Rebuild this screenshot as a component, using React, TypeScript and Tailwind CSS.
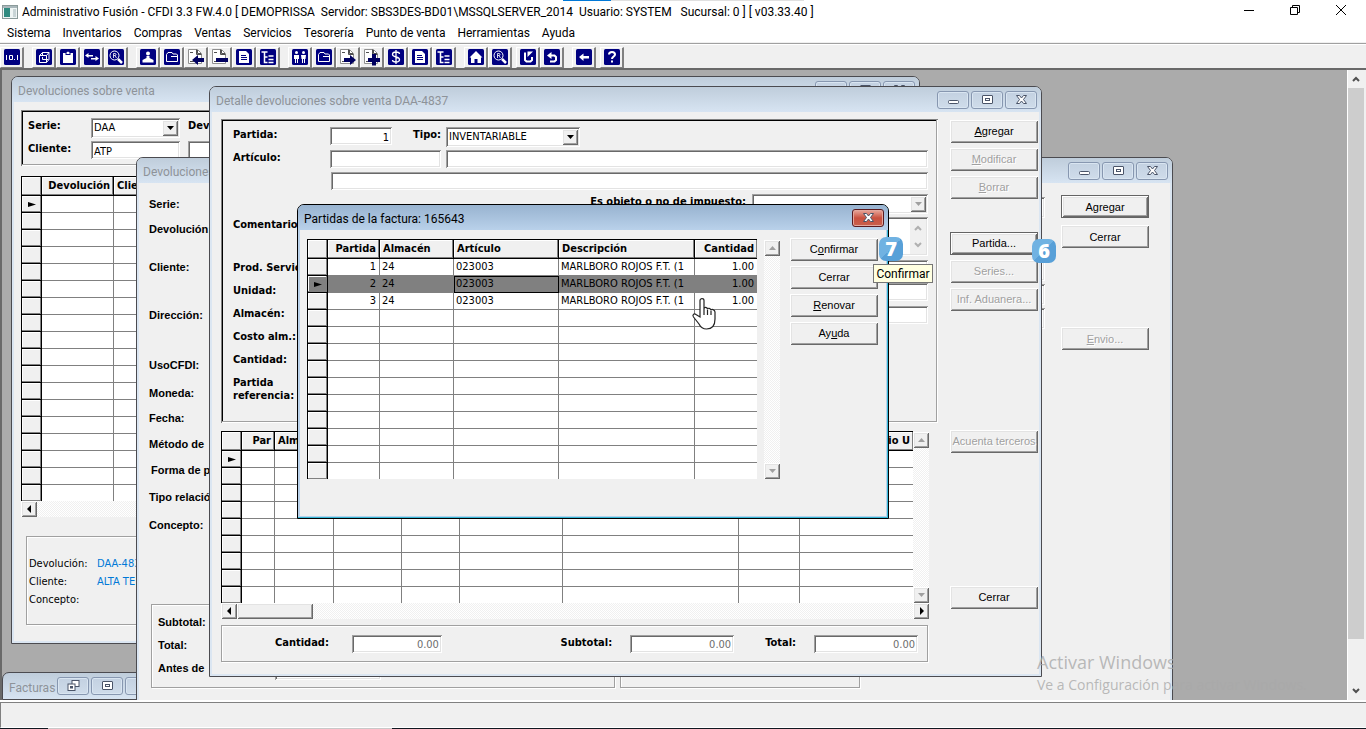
import type { ReactNode } from 'react';

const SUNKEN =
  'bg-white shadow-[inset_1px_1px_0_#a0a0a0,inset_-1px_-1px_0_#ffffff,inset_2px_2px_0_#696969,inset_-2px_-2px_0_#e3e3e3]';
const RAISED =
  'bg-[#f0f0f0] shadow-[inset_1px_1px_0_#ffffff,inset_-1px_-1px_0_#696969,inset_2px_2px_0_#e3e3e3,inset_-2px_-2px_0_#a0a0a0]';
const UI = "font-['Roboto','Open_Sans',sans-serif]";
const OPEN = "font-['Open_Sans','Noto_Sans',sans-serif]";
const TAHOMA = "font-['DejaVu_Sans_Condensed','DejaVu_Sans',sans-serif]";
const ARIAL = "font-['Liberation_Sans',Arial,sans-serif]";
const DITHER = 'bg-[repeating-conic-gradient(#ffffff_0_25%,#f0f0f0_0_50%)] bg-[length:2px_2px]';

const MENUS = ['Sistema', 'Inventarios', 'Compras', 'Ventas', 'Servicios', 'Tesorería', 'Punto de venta', 'Herramientas', 'Ayuda'];

// Iconos de la barra de herramientas
const ICONS: Record<string, ReactNode> = {
  counter: (
    <path d="M2.5 6v5M5.5 6.5h3v4h-3zM10.5 10v1M13.5 6v5" stroke="#fff" fill="none" />
  ),
  cube: (
    <path d="M3.5 6.5h7v7h-7zM3.5 6.5l3-3h6.500v7l-2.500 3M10.500 6.500l2.500-3M6.500 3.500v3M6.500 8v2.500h6" stroke="#fff" fill="none" />
  ),
  clipboard: (
    <>
      <path d="M3 4h2.500v2h5V4H13v10H3z" fill="#fff" />
      <path d="M6.500 5V3.500L8 2.500l1.500 1V5z" fill="#fff" />
    </>
  ),
  transfer: <path d="M1 6.500L4.500 4v2H9v1.500H4.500V9zM15 9.500L11.500 7v2H7v1.500h4.500V12z" fill="#fff" />,
  search: (
    <>
      <circle cx="6.500" cy="6.500" r="4.500" stroke="#fff" fill="none" />
      <path d="M5.500 9V4.500h1.500a1 1 0 010 2H5.500M7 6.500L8.500 9" stroke="#fff" fill="none" strokeWidth=".8" />
      <path d="M10 10l4 4" stroke="#fff" strokeWidth="2.500" />
    </>
  ),
  person: (
    <>
      <circle cx="8" cy="4.500" r="2" fill="#fff" />
      <path d="M6.500 7h3v2l4 2v2.500h-11V11l4-2z" fill="#fff" />
    </>
  ),
  folder: (
    <path d="M2.500 12.500v-7l1.500-2h4l1 1.500h3.500l1 1v6.500zM7 7.500h6" stroke="#fff" fill="none" />
  ),
  doc: (
    <>
      <path d="M3 2h7l3 3v9H3z" fill="#fff" />
      <path d="M5 6.500h5M5 8.500h6M5 10.500h6" stroke="#000080" />
    </>
  ),
  tree: (
    <path d="M1.500 3h6M4.500 3v10.500h3M4.500 8h3M8.500 7h5M8.500 10.500h5M8.500 13.500h5" stroke="#fff" strokeWidth="1.500" fill="none" />
  ),
  couple: (
    <>
      <circle cx="4.500" cy="3.500" r="1.500" fill="#fff" />
      <circle cx="11.500" cy="3.500" r="1.500" fill="#fff" />
      <path d="M2 6h5v4H6v4H3v-4H2zM9 6h5l-.5 4H13v4h-3v-4h-.5z" fill="#fff" />
      <path d="M4.500 10v4M11.500 10v4" stroke="#000080" />
    </>
  ),
  money: (
    <path d="M11.500 5c0-1.500-1.500-2-3.500-2S4.500 4 4.500 5.500 6 7.500 8 8s3.500 1 3.500 2.500S10 13 8 13s-3.500-.5-3.500-2M8 1v14" stroke="#fff" strokeWidth="1.300" fill="none" />
  ),
  home: <path d="M8 2l6.500 6.500H13V14H9.500v-4h-3v4H3V8.500H1.500z" fill="#fff" />,
  redo: (
    <>
      <path d="M6 4.500H5v6.500l1.500 1.500h4L12 11V8" stroke="#fff" strokeWidth="2" fill="none" />
      <path d="M7.500 2.500h5.500L7.500 8z" fill="#fff" />
    </>
  ),
  undo: (
    <>
      <path d="M6 6.500h4.500L12 8v3l-1.500 1.500H6" stroke="#fff" strokeWidth="2" fill="none" />
      <path d="M3 6.500L7.500 3v7z" fill="#fff" />
    </>
  ),
  back: <path d="M3 8l4.500-3.500V7H13v2.500H7.500V12z" fill="#fff" />,
  help: (
    <>
      <path d="M5 5.500C5 3.500 6 3 8 3s3 1 3 2.500C11 7.500 8 7.500 8 10" stroke="#fff" strokeWidth="2" fill="none" />
      <path d="M7 11.500h2v2H7z" fill="#fff" />
    </>
  ),
};

// Documentos con flecha, menos y más
const SHEETS: Record<string, ReactNode> = {
  sheetIn: <path d="M5 12l6-5v3h6v4h-6v3z" fill="#000060" />,
  sheetMinus: <path d="M5 10h12v4H5z" fill="#000060" />,
  sheetOut: <path d="M17 12l-6-5v3H5v4h6v3z" fill="#000060" />,
  sheetPlus: <path d="M9 6h4v4h4v4h-4v3.500H9V14H5v-4h4z" fill="#000060" />,
};

const TOOLBAR: { gap: string; items: [string, string][] }[] = [
  { gap: 'ml-0', items: [['counter', 'Contador']] },
  { gap: 'ml-2', items: [['cube', 'Artículos'], ['clipboard', 'Pedidos'], ['transfer', 'Traspasos'], ['search', 'Consulta']] },
  { gap: 'ml-2', items: [['person', 'Proveedor'], ['folder', 'Documentos'], ['sheetIn', 'Entrada'], ['sheetMinus', 'Cargo'], ['doc', 'Reporte'], ['tree', 'Detalle']] },
  { gap: 'ml-2', items: [['couple', 'Clientes'], ['folder', 'Facturas'], ['sheetOut', 'Salida'], ['sheetPlus', 'Abono'], ['money', 'Cobranza'], ['doc', 'Listado'], ['tree', 'Desglose']] },
  { gap: 'ml-2', items: [['home', 'Inicio'], ['search', 'Buscar']] },
  { gap: 'ml-1', items: [['redo', 'Rehacer'], ['undo', 'Deshacer']] },
  { gap: 'ml-2', items: [['back', 'Regresar']] },
  { gap: 'ml-1', items: [['help', 'Ayuda']] },
];

function ToolIcon({ name }: { name: string }) {
  if (SHEETS[name]) {
    return (
      <svg viewBox="0 0 18 18" className="h-[18px] w-[18px]">
        <path d="M1.500 1.500h9l4 4v10h-13z" fill="#fff" stroke="#909090" />
        <path d="M9.500 1.500v5h5M10.500 2v3.500H14M3 4.500h3M3 13.500h4" stroke="#505050" fill="none" />
        {SHEETS[name]}
      </svg>
    );
  }
  return (
    <svg viewBox="0 0 16 16" className="h-4 w-4">
      <rect width="16" height="16" rx="1.500" fill="#000080" />
      {ICONS[name]}
    </svg>
  );
}

function CaptionIcon({ kind }: { kind: string }) {
  return (
    <svg viewBox="0 0 13 12" className="h-3 w-[13px]" fill="#fff" stroke="#4a5468">
      {kind === 'min' && <rect x="1.500" y="6.500" width="10" height="3" rx="1" />}
      {kind === 'max' && (
        <>
          <rect x="1.500" y="1.500" width="10" height="8" rx=".5" />
          <rect x="4.500" y="4.500" width="4" height="2" />
        </>
      )}
      {kind === 'restore' && (
        <>
          <rect x="5" y=".5" width="7" height="6" />
          <rect x="1" y="4" width="7" height="6.500" />
          <rect x="3.500" y="6.500" width="2" height="1.500" />
        </>
      )}
      {kind === 'close' && (
        <path d="M1.500 1.500h3l2 2.500 2-2.500h3L8.500 5.500l3 4h-3l-2-2.500-2 2.500h-3l3-4z" />
      )}
    </svg>
  );
}

function CaptionButton({ kind, label, red = false }: { kind: string; label: string; red?: boolean }) {
  return (
    <button
      aria-label={label}
      className={`flex h-[18px] w-8 items-center justify-center rounded-[3px] border ${
        red
          ? 'border-[#5b1a1e] bg-linear-to-b from-[#e8a99e] via-[#c9503f] via-50% to-[#c8604c] shadow-[inset_0_0_0_1px_#e3a79d]'
          : 'border-[#8797b0] bg-linear-to-b from-[#c3d1e1] to-[#cfdcea] shadow-[inset_0_0_0_1px_#d9e5f1]'
      }`}
    >
      <CaptionIcon kind={kind} />
    </button>
  );
}

function Window({ title, place, active = false, children }: { title: string; place: string; active?: boolean; children: ReactNode }) {
  return (
    <section
      className={`absolute flex flex-col rounded-t-[7px] border px-[2px] pb-[2px] ${place} ${
        active
          ? 'border-black bg-[#b9d1ea] shadow-[inset_-1px_-1px_0_#35b8d6]'
          : 'border-[#4b4b50] bg-[#dbe6f2]'
      }`}
    >
      <header
        className={`-mx-[2px] flex h-[25px] shrink-0 items-center justify-between rounded-t-[6px] pr-1 pl-[6px] ${UI} text-[12px] ${
          active ? 'bg-linear-to-b from-[#98b3d0] to-[#b9d1ea] text-black' : 'bg-linear-to-b from-[#bfcddb] to-[#d7e4f2] text-[#8e9399]'
        }`}
      >
        <h2 className="pt-[2px]">{title}</h2>
        <div className="flex gap-[2px]">
          {!active && <CaptionButton kind="min" label="Minimizar" />}
          {!active && <CaptionButton kind="max" label="Maximizar" />}
          <CaptionButton kind="close" label="Cerrar" red={active} />
        </div>
      </header>
      <div className="flex flex-1 bg-[#f0f0f0]">{children}</div>
    </section>
  );
}

function Btn({ children, disabled = false, focused = false, className = '' }: { children: ReactNode; disabled?: boolean; focused?: boolean; className?: string }) {
  return (
    <button
      disabled={disabled}
      className={`h-[23px] w-[88px] shrink-0 whitespace-nowrap ${ARIAL} text-[11px] ${RAISED} ${
        disabled ? 'text-[#a0a0a0] [text-shadow:1px_1px_0_#ffffff]' : 'text-black'
      } ${focused ? 'border border-[#646464]' : ''} ${className}`}
    >
      {children}
    </button>
  );
}

function Field({ id, label, value = '', className = '', disabled = false }: { id: string; label?: string; value?: string; className?: string; disabled?: boolean }) {
  return (
    <input
      id={id}
      aria-label={label}
      defaultValue={value}
      disabled={disabled}
      className={`h-[18px] min-w-0 px-[3px] pt-[2px] ${TAHOMA} text-[11px] ${SUNKEN} ${disabled ? 'text-[#6d6d6d]' : 'text-black'} ${className}`}
    />
  );
}

function Arrow({ dir, color = '#000' }: { dir: 'up' | 'down' | 'left' | 'right'; color?: string }) {
  const d = {
    up: 'M0 6h7L3.500 2z',
    down: 'M0 2h7L3.500 6z',
    left: 'M5 0v8L1 4z',
    right: 'M2 0v8l4-4z',
  }[dir];
  return (
    <svg viewBox="0 0 7 8" className="h-2 w-[7px]">
      <path d={d} fill={color} />
    </svg>
  );
}

function Combo({ id, value, className, disabled = false }: { id: string; value: string; className: string; disabled?: boolean }) {
  return (
    <div className={`relative h-5 shrink-0 font-normal ${className}`}>
      <select id={id} disabled={disabled} className={`h-full w-full appearance-none pr-5 pl-[3px] ${TAHOMA} text-[11px] text-black ${SUNKEN}`}>
        <option>{value}</option>
      </select>
      <span className={`pointer-events-none absolute inset-y-[2px] right-[2px] flex w-4 items-center justify-center ${RAISED}`}>
        <Arrow dir="down" color={disabled ? '#a0a0a0' : '#000'} />
      </span>
    </div>
  );
}

function ScrollButton({ dir, off = false }: { dir: 'up' | 'down' | 'left' | 'right'; off?: boolean }) {
  return (
    <button aria-label={`Desplazar ${dir}`} disabled={off} className={`flex h-4 w-4 shrink-0 items-center justify-center ${RAISED}`}>
      <Arrow dir={dir} color={off ? '#a0a0a0' : '#000'} />
    </button>
  );
}

function VScroll({ className = '' }: { className?: string }) {
  return (
    <div className={`flex w-4 flex-col justify-between ${DITHER} ${className}`}>
      <ScrollButton dir="up" off />
      <ScrollButton dir="down" off />
    </div>
  );
}

type Col = { name: string; width: string; right?: boolean };

function Grid({ cols, rows, count, current }: { cols: Col[]; rows: string[][]; count: number; current: number }) {
  return (
    <table className={`table-fixed border-separate border-spacing-0 border-t border-l border-black bg-white ${TAHOMA} text-[11px] leading-[14px]`}>
      <colgroup>
        <col className="w-5" />
        {cols.map((col, i) => (
          <col key={i} className={col.width} />
        ))}
      </colgroup>
      <thead>
        <tr className="h-[19px]">
          <th className="border-r border-b border-black bg-[#f0f0f0] p-0 shadow-[inset_-1px_-1px_0_#808080,inset_1px_1px_0_#ffffff]" />
          {cols.map((col, i) => (
            <th
              key={i}
              className={`overflow-hidden border-r border-b border-black bg-[#f0f0f0] px-[3px] py-0 font-bold whitespace-nowrap shadow-[inset_-1px_-1px_0_#808080,inset_1px_1px_0_#ffffff] last:border-r-0 ${
                col.right ? 'text-right' : 'text-left'
              }`}
            >
              {col.name}
            </th>
          ))}
        </tr>
      </thead>
      <tbody>
        {Array.from({ length: count }, (_, r) => {
          const selected = r === current && rows.length > 0;
          return (
            <tr key={r} className={`h-[17px] ${selected ? 'bg-[#808080]' : ''}`}>
              <td
                className={`border-r border-b border-black p-0 shadow-[inset_-1px_-1px_0_#808080,inset_1px_1px_0_#ffffff] ${
                  selected ? 'bg-[#808080]' : 'bg-[#f0f0f0]'
                }`}
              >
                {r === current && (
                  <svg viewBox="0 0 8 7" className="mx-auto h-[7px] w-2">
                    <path d="M0 1l8 2.500L0 6z" />
                  </svg>
                )}
              </td>
              {cols.map((col, c) => (
                <td
                  key={c}
                  className={`overflow-hidden border-r border-b border-[#808080] py-0 pr-[3px] pl-[2px] whitespace-nowrap last:border-r-0 ${
                    col.right ? 'text-right' : 'text-left'
                  } ${selected && c === 2 ? 'outline -outline-offset-1 outline-black' : ''}`}
                >
                  {rows[r]?.[c]}
                </td>
              ))}
            </tr>
          );
        })}
      </tbody>
    </table>
  );
}

const INVOICE_COLS: Col[] = [
  { name: 'Partida', width: 'w-[52px]', right: true },
  { name: 'Almacén', width: 'w-[74px]' },
  { name: 'Artículo', width: 'w-[105px]' },
  { name: 'Descripción', width: 'w-[136px]' },
  { name: 'Cantidad', width: 'w-[62px]', right: true },
];

const INVOICE_ROWS = [
  ['1', '24', '023003', 'MARLBORO ROJOS F.T. (1', '1.00'],
  ['2', '24', '023003', 'MARLBORO ROJOS F.T. (1', '1.00'],
  ['3', '24', '023003', 'MARLBORO ROJOS F.T. (1', '1.00'],
];

const DETAIL_COLS: Col[] = [
  { name: 'Par', width: 'w-[33px]', right: true },
  { name: 'Almacén', width: 'w-[59px]' },
  { name: '', width: 'w-[68px]' },
  { name: '', width: 'w-[58px]' },
  { name: '', width: 'w-[103px]' },
  { name: '', width: 'w-[176px]' },
  { name: '', width: 'w-[61px]' },
  { name: 'Precio U', width: 'w-[113px]', right: true },
];

const RETURN_COLS: Col[] = [
  { name: 'Devolución', width: 'w-[72px]', right: true },
  { name: 'Cliente', width: 'w-[110px]' },
];

const RETURN_LABELS = [
  ['Serie:', 'h-[25px]'],
  ['Devolución:', 'h-[38px]'],
  ['Cliente:', 'h-[48px]'],
  ['Dirección:', 'h-[50px]'],
  ['UsoCFDI:', 'h-[28px]'],
  ['Moneda:', 'h-[25px]'],
  ['Fecha:', 'h-[26px]'],
  ['Método de', 'h-[26px]'],
  ['Forma de pago:', 'h-[27px] pl-[2px]'],
  ['Tipo relación:', 'h-[28px]'],
  ['Concepto:', 'h-[86px]'],
];

const ROW = 'flex items-start text-[11px] leading-4 font-bold';
const FORM_LABEL = 'w-[97px] shrink-0 whitespace-nowrap';
const ETCHED = 'border border-[#a0a0a0] shadow-[inset_1px_1px_0_#ffffff,1px_1px_0_#ffffff]';
const PANEL = 'shadow-[inset_1px_1px_0_#808080,inset_-1px_-1px_0_#ffffff,inset_-2px_-2px_0_#a0a0a0,inset_2px_2px_0_#000000]';

function ReturnsWindow() {
  return (
    <Window title="Devoluciones sobre venta" place="left-[9px] top-[6px] h-[568px] w-[909px]">
      <div className={`flex flex-1 flex-col px-[7px] pt-2 ${TAHOMA}`}>
        <div className={`flex h-14 shrink-0 flex-col gap-[3px] pt-2 pl-[7px] ${PANEL}`}>
          <div className={ROW}>
            <label htmlFor="serie" className="w-[63px]">Serie:</label>
            <Combo id="serie" value="DAA" className="w-[89px]" />
            <span className="ml-2">Dev</span>
          </div>
          <div className={ROW}>
            <label htmlFor="cliente" className="w-[63px]">Cliente:</label>
            <Field id="cliente" value="ATP" className="w-[89px] font-normal" />
            <Field id="cliente-nombre" label="Nombre del cliente" className="ml-2 w-[200px]" />
          </div>
        </div>
        <div className="mt-[10px] h-[325px] shrink-0 overflow-hidden">
          <Grid cols={RETURN_COLS} rows={[]} count={18} current={0} />
        </div>
        <div className={`flex h-4 shrink-0 ${DITHER}`}>
          <ScrollButton dir="left" />
        </div>
        <dl className={`mt-[19px] ml-[5px] grid h-[89px] shrink-0 grid-cols-[68px_1fr] content-start pt-[18px] pl-[2px] text-[11px] leading-[18px] ${ETCHED}`}>
          <dt>Devolución:</dt>
          <dd className="text-[#0078d7]">DAA-4837</dd>
          <dt>Cliente:</dt>
          <dd className="text-[#0078d7]">ALTA TE</dd>
          <dt>Concepto:</dt>
        </dl>
      </div>
    </Window>
  );
}

function ReturnFormWindow() {
  return (
    <Window title="Devoluciones sobre venta" place="left-[134px] top-[87px] -bottom-2 w-[1037px]">
      <div className={`flex flex-1 pr-[21px] pl-[10px] ${ARIAL} text-[11px] leading-[14px] font-bold`}>
        <div className="flex flex-1 flex-col pt-[14px]">
          <div className="flex">
            <ul>
              {RETURN_LABELS.map(([label, height]) => (
                <li key={label} className={`whitespace-nowrap ${height}`}>{label}</li>
              ))}
            </ul>
            <div className="ml-5 flex flex-1 flex-col">
              <Field id="f-serie" label="Serie" className="h-[21px]" />
              <Field id="f-cliente" label="Cliente" className="mt-[42px] h-[21px]" />
              <Field id="f-direccion" label="Dirección" className="mt-[3px] h-[21px]" />
              <Field id="f-colonia" label="Colonia" className="mt-[3px] h-[21px]" />
            </div>
          </div>
          <div className="ml-[2px] flex gap-[5px]">
            <div className={`h-[84px] w-[464px] pt-[6px] pl-[6px] leading-[23px] ${ETCHED}`}>
              <p>Subtotal:</p>
              <p>Total:</p>
              <div className="flex items-start">
                <label htmlFor="antes" className="w-[117px]">Antes de</label>
                <Field id="antes" className="h-[23px] w-[106px]" />
              </div>
            </div>
            <div className={`h-[84px] w-60 ${ETCHED}`} />
          </div>
        </div>
        <div className="ml-4 flex flex-col pt-3 font-normal">
          <Btn focused>Agregar</Btn>
          <Btn className="mt-[7px]">Cerrar</Btn>
          <Btn disabled className="mt-[79px]"><u>E</u>nvio...</Btn>
        </div>
      </div>
    </Window>
  );
}

function DetailWindow() {
  return (
    <Window title="Detalle devoluciones sobre venta DAA-4837" place="left-[207px] top-[16px] h-[591px] w-[833px]">
      <div className={`flex flex-1 flex-col pt-[7px] pl-[9px] ${TAHOMA}`}>
        <div className={`flex h-[304px] flex-col gap-[5px] pt-2 pr-[10px] pl-3 ${PANEL}`}>
          <div className={`h-[18px] ${ROW}`}>
            <label htmlFor="partida" className={FORM_LABEL}>Partida:</label>
            <Field id="partida" value="1" className="w-[62px] text-right font-normal" />
            <label htmlFor="tipo" className="mr-[5px] w-[49px] text-right">Tipo:</label>
            <Combo id="tipo" value="INVENTARIABLE" className="w-[134px]" />
          </div>
          <div className={`h-[17px] ${ROW}`}>
            <label htmlFor="articulo" className={FORM_LABEL}>Artículo:</label>
            <Field id="articulo" className="mr-[5px] w-[111px]" />
            <Field id="articulo-nombre" label="Nombre del artículo" className="flex-1" />
          </div>
          <div className={`h-[17px] pl-[98px] ${ROW}`}>
            <Field id="articulo-extra" label="Descripción adicional" className="flex-1" />
          </div>
          <div className={`h-[18px] justify-end gap-[6px] ${ROW}`}>
            <label htmlFor="impuesto">Es objeto o no de impuesto:</label>
            <Combo id="impuesto" value="" className="w-[176px]" disabled />
          </div>
          <div className={`h-[38px] ${ROW}`}>
            <label htmlFor="comentario" className={FORM_LABEL}>Comentario:</label>
            <div className="relative flex h-[39px] flex-1">
              <textarea id="comentario" className={`h-full flex-1 resize-none ${SUNKEN}`} />
              <div className="absolute inset-y-[2px] right-[2px] flex w-4 flex-col items-center justify-around bg-[#f0f0f0]">
                <svg viewBox="0 0 8 6" className="h-[6px] w-2"><path d="M1 5l3-3 3 3" stroke="#b0b0b0" strokeWidth="2" fill="none" /></svg>
                <svg viewBox="0 0 8 6" className="h-[6px] w-2"><path d="M1 1l3 3 3-3" stroke="#b0b0b0" strokeWidth="2" fill="none" /></svg>
              </div>
            </div>
          </div>
          {['Prod. Servicio:', 'Unidad:', 'Almacén:'].map((label) => (
            <div key={label} className={`h-[18px] ${ROW}`}>
              <label htmlFor={label} className={FORM_LABEL}>{label}</label>
              <Field id={label} className="flex-1" />
            </div>
          ))}
          {['Costo alm.:', 'Cantidad:'].map((label) => (
            <div key={label} className={`h-[18px] ${ROW}`}>
              <label htmlFor={label} className={FORM_LABEL}>{label}</label>
              <Field id={label} className="w-[110px]" />
            </div>
          ))}
          <div className="flex items-start pt-px text-[11px] leading-[13px] font-bold">
            <label htmlFor="referencia" className={FORM_LABEL}>Partida<br />referencia:</label>
            <Field id="referencia" className="w-[110px]" />
          </div>
        </div>

        <div className="mt-2 mr-[9px]">
          <div className="flex h-[172px]">
            <div className="flex-1 overflow-hidden">
              <Grid cols={DETAIL_COLS} rows={[]} count={9} current={0} />
            </div>
            <VScroll className="mt-px" />
          </div>
          <div className={`flex h-4 ${DITHER}`}>
            <ScrollButton dir="left" />
            <span className={`w-[76px] ${RAISED}`} />
            <span className="flex-1" />
            <ScrollButton dir="right" />
          </div>
        </div>

        {/* Totales */}
        <div className={`mt-[6px] mr-[10px] flex h-[37px] items-center justify-between pr-[9px] pl-[53px] text-[11px] font-bold ${ETCHED}`}>
          <div className="flex items-center gap-[23px]">
            <label htmlFor="t-cantidad">Cantidad:</label>
            <Field id="t-cantidad" value="0.00" disabled className="w-[90px] text-right font-normal" />
          </div>
          <div className="flex items-center">
            <label htmlFor="t-subtotal" className="mr-[18px]">Subtotal:</label>
            <Field id="t-subtotal" value="0.00" disabled className="w-[104px] text-right font-normal" />
            <label htmlFor="t-total" className="mr-[18px] ml-[31px]">Total:</label>
            <Field id="t-total" value="0.00" disabled className="w-[104px] text-right font-normal" />
          </div>
        </div>
      </div>

      <div className="flex flex-col gap-[5px] pt-2 pr-px pl-3">
        <Btn><u>A</u>gregar</Btn>
        <Btn disabled><u>M</u>odificar</Btn>
        <Btn disabled><u>B</u>orrar</Btn>
        <Btn focused className="mt-7">Partida...</Btn>
        <Btn disabled>Series...</Btn>
        <Btn disabled>Inf. Aduanera...</Btn>
        <Btn disabled className="mt-[114px]">Acuenta terceros</Btn>
        <Btn className="mt-32">Cerrar</Btn>
      </div>
    </Window>
  );
}

function InvoiceLinesDialog() {
  return (
    <Window title="Partidas de la factura: 165643" place="left-[295px] top-[134px] h-[315px] w-[592px]" active>
      <div className="flex flex-1 items-start pt-2 pl-[7px]">
        <div className="mt-px h-60 w-[450px] overflow-hidden">
          <Grid cols={INVOICE_COLS} rows={INVOICE_ROWS} count={13} current={1} />
        </div>
        <VScroll className="mt-[2px] ml-[7px] h-[239px]" />
        <div className="ml-[10px] flex flex-col gap-[5px]">
          <Btn>C<u>o</u>nfirmar</Btn>
          <Btn>Cerrar</Btn>
          <Btn><u>R</u>enovar</Btn>
          <Btn>Ay<u>u</u>da</Btn>
        </div>
      </div>
    </Window>
  );
}

function Badge({ n, place }: { n: number; place: string }) {
  return (
    <span className={`absolute flex h-6 w-6 items-center justify-center rounded-[7px] bg-linear-to-br from-[#70b2e2] from-50% to-[#58a0d8] to-50% ${OPEN} text-[20px] font-extrabold text-white ${place}`}>
      {n}
    </span>
  );
}

export default function App() {
  return (
    <div className={`flex h-screen flex-col overflow-hidden bg-[#f0f0f0] text-black ${UI}`}>
      <div className="relative flex h-[23px] shrink-0 items-center bg-white pl-[2px] text-[12px]">
        <span className="absolute top-0 left-[563px] flex h-px w-[241px] bg-[#e0e0e0]">
          <span className="w-12 bg-[#0078d7]" />
        </span>
        <svg viewBox="0 0 16 14" className="h-[14px] w-4">
          <rect x=".5" y=".5" width="15" height="13" fill="#eef4f4" stroke="#8a9a9a" />
          <path d="M1 1h14v2H1z" fill="#a9b7bb" />
          <path d="M2 3h6v9H2z" fill="#2f8a80" />
          <path d="M11 4h3v8h-3z" fill="#c8d4d6" />
        </svg>
        <h1 className="ml-1 pt-px whitespace-pre">
          {'Administrativo Fusión - CFDI 3.3 FW.4.0 [ DEMOPRISSA  Servidor: SBS3DES-BD01\\MSSQLSERVER_2014  Usuario: SYSTEM   Sucursal: 0 ] [ v03.33.40 ]'}
        </h1>
        <div className="ml-auto flex self-start pt-1 pr-[2px]">
          <button aria-label="Minimizar" className="flex h-3 w-[46px] items-center justify-center">
            <svg viewBox="0 0 12 12" className="h-3 w-3"><path d="M1 6.500h10" stroke="#000" /></svg>
          </button>
          <button aria-label="Restaurar" className="flex h-3 w-[46px] items-center justify-center">
            <svg viewBox="0 0 12 12" className="h-3 w-3"><path d="M1.500 3.500h7v7h-7zM3.500 3.500v-2h7v7h-2" stroke="#000" fill="none" /></svg>
          </button>
          <button aria-label="Salir" className="flex h-3 w-[46px] items-center justify-center">
            <svg viewBox="0 0 12 12" className="h-3 w-3"><path d="M1 1l10 10M11 1L1 11" stroke="#000" /></svg>
          </button>
        </div>
      </div>

      <nav className="flex h-[19px] shrink-0 items-center gap-3 bg-white pl-[7px] text-[12px]">
        {MENUS.map((menu) => (
          <button key={menu}>{menu}</button>
        ))}
      </nav>

      <div className="mt-px flex h-[25px] shrink-0 items-center border-t border-[#a0a0a0] pt-[2px] shadow-[inset_0_1px_0_#ffffff]">
        {TOOLBAR.map((group, i) => (
          <div key={i} className={`flex ${group.gap}`}>
            {group.items.map(([icon, label]) => (
              <button
                key={icon}
                aria-label={label}
                className="flex h-[21px] w-6 items-center justify-center border-t border-r-2 border-b border-l border-t-white border-r-[#808080] border-b-[#808080] border-l-white"
              >
                <ToolIcon name={icon} />
              </button>
            ))}
          </div>
        ))}
      </div>

      <main className="flex min-h-0 flex-1 border-t-2 border-l-2 border-t-[#696969] border-l-[#696969]">
        <div className="relative flex-1 overflow-hidden bg-[#ababab]">
          <section className="absolute bottom-0 left-0 flex h-7 w-40 items-center gap-[2px] rounded-t-[7px] border border-[#4b4b50] bg-linear-to-b from-[#bfcddb] to-[#d7e4f2] pl-[6px] text-[12px] text-[#8e9399]">
            <h2 className="w-[46px] pt-1">Facturas</h2>
            <CaptionButton kind="restore" label="Restaurar" />
            <CaptionButton kind="max" label="Maximizar" />
            <CaptionButton kind="close" label="Cerrar" />
          </section>
          <ReturnsWindow />
          <ReturnFormWindow />
          <DetailWindow />
          <InvoiceLinesDialog />

          <Badge n={7} place="left-[877px] top-[167px]" />
          <Badge n={6} place="left-[1030px] top-[169px]" />
          <div role="tooltip" className="absolute top-[194px] left-[871px] flex h-[19px] w-[60px] items-center justify-center border border-[#767676] bg-[#ffffe1] text-[12px]">
            Confirmar
          </div>
          <svg viewBox="0 0 26 34" className="absolute top-[226px] left-[689px] h-[34px] w-[26px]">
            <path
              d="M9 21V4.500C9 2 13 2 13 4.500V13c0-2.500 3.500-2 3.500.5 0-2 3.500-1.500 3.500 1 0-2 4-1 4 1.500v7c0 6-3 10-8.500 10-4 0-6-2-7.500-5l-5.500-7c-1.500-2 .5-4 2.500-2.500L9 21z"
              fill="#fff"
              stroke="#222"
              strokeWidth="1.200"
            />
            <path d="M13 13v6M16.500 14v5M20 15v4" stroke="#222" strokeWidth="1.200" fill="none" />
          </svg>

          <div className={`pointer-events-none absolute top-[580px] left-[1035px] whitespace-nowrap text-[#a9a9a9]/80 ${OPEN}`}>
            <p className="text-[18px] leading-6">Activar Windows</p>
            <p className="text-[14px] leading-[22px]">Ve a Configuración para activar Windows.</p>
          </div>
        </div>

        <div className="mr-[2px] flex w-[17px] flex-col items-center border-l border-white bg-[#f0f0f0]">
          <svg viewBox="0 0 8 6" className="my-[6px] h-[6px] w-2"><path d="M1 5l3-3 3 3" stroke="#505050" strokeWidth="2" fill="none" /></svg>
          <span className="w-full flex-1 bg-[#cdcdcd]" />
          <svg viewBox="0 0 8 6" className="mt-[49px] mb-[6px] h-[6px] w-2"><path d="M1 1l3 3 3-3" stroke="#505050" strokeWidth="2" fill="none" /></svg>
        </div>
      </main>

      <footer className="shrink-0">
        <div className="h-[2px] bg-white" />
        <div className="h-[26px] border-t border-b border-l border-t-[#808080] border-b-white border-l-[#808080]" />
        <div className="flex h-px bg-[#101820]">
          <span className="w-12" />
          <span className="w-[344px] bg-[#c8c8c8]" />
        </div>
      </footer>
    </div>
  );
}
